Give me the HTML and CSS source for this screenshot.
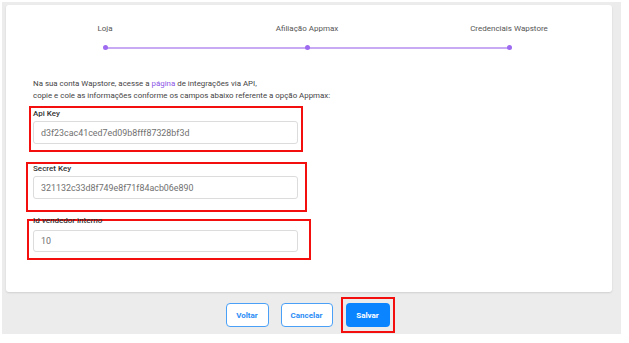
FILE: index.html
```html
<!DOCTYPE html>
<html lang="pt-BR">
<head>
    <meta charset="UTF-8">
    <meta name="viewport" content="width=device-width, initial-scale=1.0">
    <title>Integração Wapstore</title>
    <link rel="stylesheet" href="styles.css">
</head>
<body>
    <div class="page">
        <div class="card">
            <div class="stepper">
                <div class="step step-first">
                    <span class="step-label">Loja</span>
                    <div class="step-track"><span class="step-dot"></span></div>
                </div>
                <div class="step">
                    <span class="step-label">Afiliação Appmax</span>
                    <div class="step-track"><span class="step-dot"></span></div>
                </div>
                <div class="step step-last">
                    <span class="step-label">Credenciais Wapstore</span>
                    <div class="step-track"><span class="step-dot"></span></div>
                </div>
            </div>

            <p class="intro">
                Na sua conta Wapstore, acesse a <a href="#" class="intro-link">página</a> de integrações via API,<br>
                copie e cole as informações conforme os campos abaixo referente a opção Appmax:
            </p>

            <div class="field field-api">
                <label for="api-key">Api Key</label>
                <input type="text" id="api-key" value="d3f23cac41ced7ed09b8fff87328bf3d">
            </div>

            <div class="field field-secret">
                <label for="secret-key">Secret Key</label>
                <input type="text" id="secret-key" value="321132c33d8f749e8f71f84acb06e890">
            </div>

            <div class="field field-id">
                <label for="seller-id">Id vendedor interno</label>
                <input type="text" id="seller-id" value="10">
            </div>
        </div>

        <div class="actions">
            <button class="btn btn-outline btn-back">Voltar</button>
            <button class="btn btn-outline btn-cancel">Cancelar</button>
            <div class="highlight">
                <button class="btn btn-primary">Salvar</button>
            </div>
        </div>
    </div>
</body>
</html>
```

FILE: styles.css
```css
body {
    margin: 0;
    padding: 0;
    background: white;
    font-family: Roboto, "Liberation Sans", Arial, sans-serif;
    color: #444;
}

.page {
    margin: 2px 8px 0 2px;
    height: 332px;
    box-sizing: border-box;
    padding: 3px 9px 0 4px;
    background: #ececec;
}

.card {
    height: 287px;
    box-sizing: border-box;
    padding-top: 19px;
    background: white;
    border-radius: 3px;
    box-shadow: 0 1px 2px rgba(0, 0, 0, 0.12);
}

/* stepper */
.stepper {
    display: grid;
    grid-template-columns: repeat(3, 1fr);
    margin: 0 2px 0 -2px;
}

.step {
    display: flex;
    flex-direction: column;
    align-items: center;
}

.step-label {
    font-size: 8px;
    line-height: 10px;
    color: #555;
}

.step-track {
    position: relative;
    width: 100%;
    height: 5px;
    margin-top: 11px;
    display: flex;
    justify-content: center;
}

.step-track::before {
    content: "";
    position: absolute;
    top: 2px;
    left: 0;
    right: 0;
    height: 2px;
    background: #c8a9f6;
}

.step-first .step-track::before { left: 50%; }
.step-last .step-track::before { right: 50%; }

.step-dot {
    position: relative;
    width: 5px;
    height: 5px;
    border-radius: 50%;
    background: #9d6af0;
}

/* intro text */
.intro {
    margin: 28px 0 0 27px;
    font-size: 7.9px;
    line-height: 12px;
    color: #444;
}

.intro-link {
    color: #8b55e6;
    text-decoration: none;
}

/* form fields */
.field {
    display: flex;
    flex-direction: column;
    box-sizing: border-box;
    border: 2px solid #f40f0f;
}

.field label {
    font-size: 8px;
    line-height: 10px;
    font-weight: 500;
    color: #333;
}

.field input {
    width: 265px;
    height: 23px;
    box-sizing: border-box;
    margin-top: 2px;
    padding: 0 7px;
    border: 1px solid #dcdcdc;
    border-radius: 3px;
    font-family: inherit;
    font-size: 8.9px;
    color: #707070;
    outline: none;
}

.field-api {
    width: 274px;
    height: 46px;
    margin: 4px 0 0 23px;
    padding: 1px 0 0 2px;
}

.field-secret {
    width: 281px;
    height: 50px;
    margin: 10px 0 0 20px;
    padding: 0 0 0 5px;
}

.field-id {
    width: 284px;
    height: 41px;
    margin: 7px 0 0 21px;
    padding: 0 0 0 4px;
}

.field-id label {
    margin-top: -5px;
}

.field-id input {
    margin-top: 4px;
    height: 22px;
}

/* actions */
.actions {
    display: flex;
    justify-content: center;
    align-items: center;
    margin-top: 5px;
    padding-left: 2px;
}

.btn {
    height: 24px;
    box-sizing: border-box;
    border-radius: 4px;
    font-family: inherit;
    font-size: 8px;
    font-weight: bold;
    cursor: pointer;
}

.btn-outline {
    background: white;
    color: #2b8cf5;
    border: 1.5px solid #4aa0f7;
}

.btn-back {
    width: 43px;
    margin-right: 12px;
}

.btn-cancel {
    width: 52px;
    margin-right: 8px;
}

.highlight {
    border: 2px solid #f40f0f;
    padding: 4px 3px;
}

.btn-primary {
    display: block;
    width: 44px;
    background: #0a85ff;
    color: white;
    border: none;
}
```
